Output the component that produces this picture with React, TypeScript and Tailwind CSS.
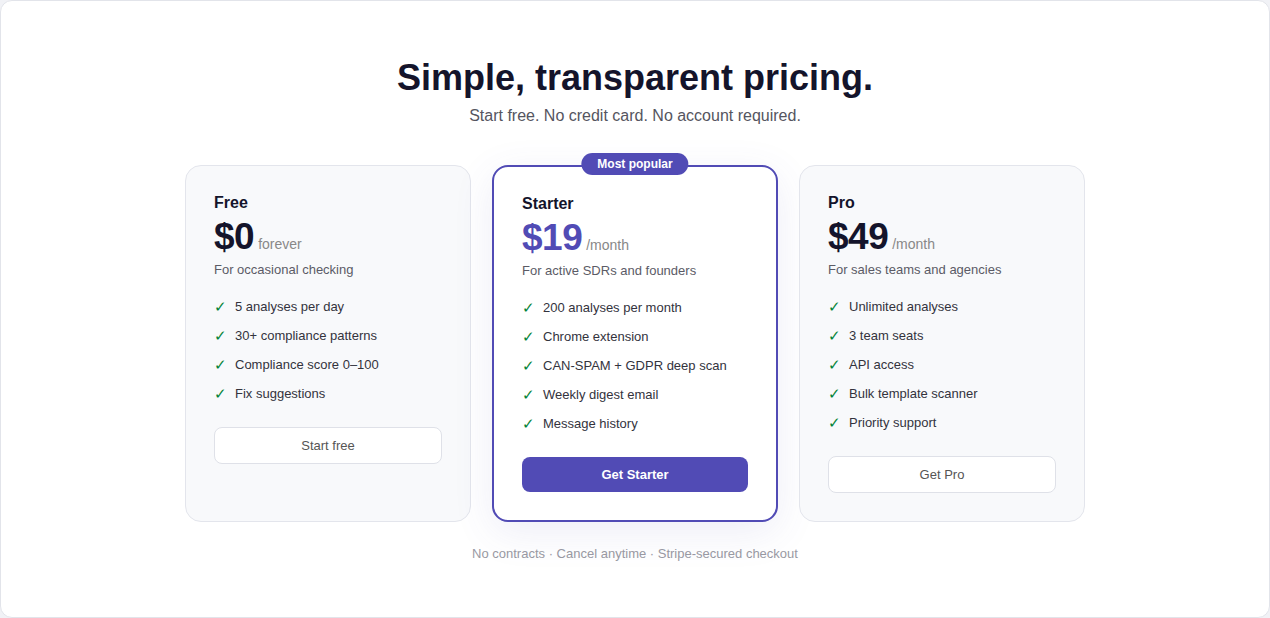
import { useState } from 'react';

interface Plan {
    name: string;
    price: string;
    period: string;
    blurb: string;
    features: string[];
    cta: string;
    featured?: boolean;
}

const plans: Plan[] = [
    {
        name: 'Free',
        price: '$0',
        period: 'forever',
        blurb: 'For occasional checking',
        features: ['5 analyses per day', '30+ compliance patterns', 'Compliance score 0–100', 'Fix suggestions'],
        cta: 'Start free',
    },
    {
        name: 'Starter',
        price: '$19',
        period: '/month',
        blurb: 'For active SDRs and founders',
        features: [
            '200 analyses per month',
            'Chrome extension',
            'CAN-SPAM + GDPR deep scan',
            'Weekly digest email',
            'Message history',
        ],
        cta: 'Get Starter',
        featured: true,
    },
    {
        name: 'Pro',
        price: '$49',
        period: '/month',
        blurb: 'For sales teams and agencies',
        features: ['Unlimited analyses', '3 team seats', 'API access', 'Bulk template scanner', 'Priority support'],
        cta: 'Get Pro',
    },
];

function PlanCard({ plan, onPick }: { plan: Plan; onPick: (name: string) => void }) {
    const featured = plan.featured;

    return (
        <div
            className={
                featured
                    ? 'relative rounded-2xl border-2 border-[#514bb5] bg-white px-7 pt-7 pb-7 shadow-[0_10px_40px_rgba(81,75,181,0.10)]'
                    : 'relative rounded-2xl border border-[#e3e5ec] bg-[#f8f9fb] px-7 pt-7 pb-7'
            }
        >
            {featured && (
                <div className="absolute -top-[14px] left-1/2 -translate-x-1/2 rounded-full bg-[#514bb5] px-4 h-[22px] flex items-center text-xs font-bold text-white whitespace-nowrap">
                    Most popular
                </div>
            )}

            {/* Header */}
            <div className="-mt-px text-base font-bold leading-5 text-[#14142b]">{plan.name}</div>
            <div className="mt-[4px] flex items-baseline gap-1">
                <span
                    className={
                        featured
                            ? 'text-[37px] font-bold leading-10 tracking-[-0.5px] text-[#514bb5]'
                            : 'text-[37px] font-bold leading-10 tracking-[-0.5px] text-[#14142b]'
                    }
                >
                    {plan.price}
                </span>
                <span className="text-sm text-[#888]">{plan.period}</span>
            </div>
            <p className="mt-[3px] text-[13px] leading-5 text-[#5b5b66]">{plan.blurb}</p>

            {/* Features */}
            <ul className="mt-[17px] space-y-[9px]">
                {plan.features.map((f) => (
                    <li key={f} className="flex items-center gap-[9px] text-[13px] leading-5 text-[#33333d]">
                        <span className="w-3 text-[15px] text-green-700">✓</span>
                        <span>{f}</span>
                    </li>
                ))}
            </ul>

            {/* CTA */}
            <button
                type="button"
                onClick={() => onPick(plan.name)}
                className={
                    featured
                        ? 'mt-[23px] w-full h-[35px] rounded-lg bg-[#514bb5] text-[13px] font-bold text-white'
                        : 'mt-[23px] w-full h-[37px] rounded-lg border border-[#dfe1e8] bg-white text-[13px] text-[#555]'
                }
            >
                {plan.cta}
            </button>
        </div>
    );
}

export default function App() {
    const [picked, setPicked] = useState<string | null>(null);

    return (
        <div className="h-[618px] w-full bg-[#f1f2f6] font-['Liberation_Sans',Arial,sans-serif]">
            <div className="h-full w-[1270px] rounded-xl border border-[#e2e4ea] bg-white">
                <div className="pt-[57px] text-center">
                    <h1 className="text-[36px] font-bold leading-10 text-[#14142b]">Simple, transparent pricing.</h1>
                    <p className="mt-[6px] text-base leading-6 text-[#555560]">
                        Start free. No credit card. No account required.
                    </p>
                </div>

                <div className="mx-auto mt-[37px] grid w-[900px] grid-cols-3 gap-[21px]">
                    {plans.map((p) => (
                        <PlanCard key={p.name} plan={p} onPick={setPicked} />
                    ))}
                </div>

                <p className="mt-[22px] text-center text-[13px] leading-5 text-[#9a9aa3]">
                    {picked ? `Selected: ${picked} · ` : ''}No contracts · Cancel anytime · Stripe-secured checkout
                </p>
            </div>
        </div>
    );
}
